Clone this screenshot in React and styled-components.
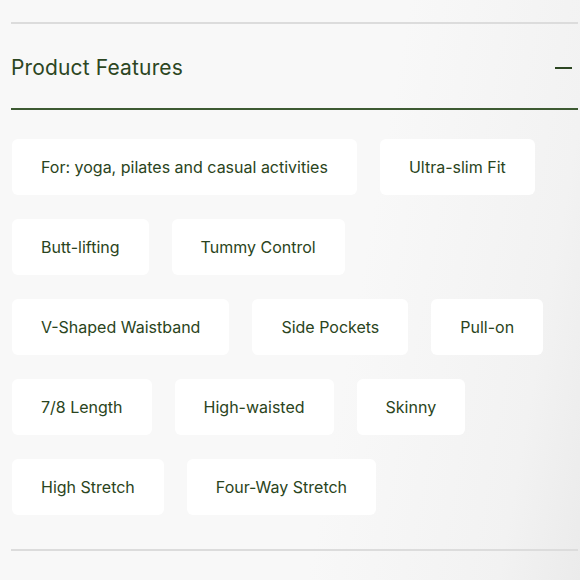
import styled, { createGlobalStyle } from "styled-components";

const GlobalStyle = createGlobalStyle`
  html, body {
    margin: 0;
    padding: 0;
    background: #f8f8f8;
  }
  body {
    font-family: Inter, "Liberation Sans", sans-serif;
  }
`

const Page = styled.div`
  width: 580px;
  height: 580px;
  box-sizing: border-box;
  padding: 22px 2px 0 11px;
  background: linear-gradient(100deg, #f8f8f8 60%, #f2f2f2 88%, #ebebeb 100%);
  overflow: hidden;
`

const Section = styled.section`
  border-top: 2px solid #dcdcdc;
  border-bottom: 2px solid #dcdcdc;
  padding-bottom: 34px;
`

const Header = styled.div`
  display: flex;
  align-items: center;
  justify-content: space-between;
  height: 86px;
  padding-top: 3px;
  box-sizing: border-box;
  border-bottom: 2px solid #3d5a32;
`

const Titulo = styled.h2`
  margin: 0;
  font-size: 21px;
  font-weight: 400;
  color: #2c4622;
  letter-spacing: 0.15px;
`

const Minus = styled.span`
  display: block;
  width: 17px;
  height: 2px;
  margin-right: 6px;
  background: #2c4622;
`

const ChipList = styled.div`
  display: flex;
  flex-wrap: wrap;
  gap: 24px 23px;
  padding-top: 29px;
  padding-left: 1px;
`

const Chip = styled.div`
  height: 56px;
  display: flex;
  align-items: center;
  padding: 0 29px;
  background: #ffffff;
  border-radius: 6px;
  font-size: 16px;
  color: #2a4420;
  white-space: nowrap;
`

const features = [
  "For: yoga, pilates and casual activities",
  "Ultra-slim Fit",
  "Butt-lifting",
  "Tummy Control",
  "V-Shaped Waistband",
  "Side Pockets",
  "Pull-on",
  "7/8 Length",
  "High-waisted",
  "Skinny",
  "High Stretch",
  "Four-Way Stretch",
]

const App = () => {
  return (
    <Page>
      <GlobalStyle />
      <Section>
        <Header>
          <Titulo>Product Features</Titulo>
          <Minus />
        </Header>
        <ChipList>
          {features.map((f) => (
            <Chip key={f}>{f}</Chip>
          ))}
        </ChipList>
      </Section>
    </Page>
  )
}

export default App
